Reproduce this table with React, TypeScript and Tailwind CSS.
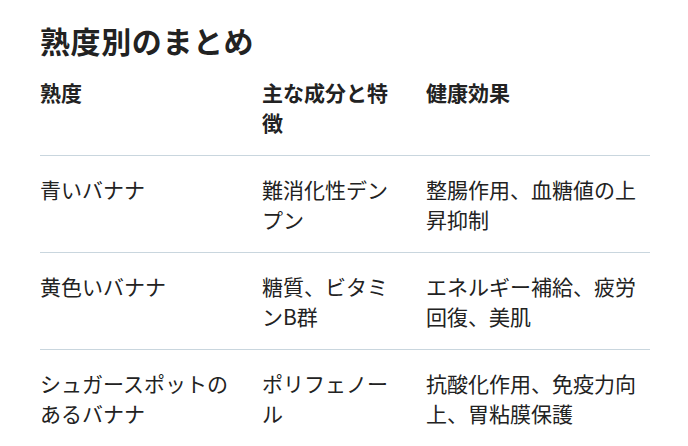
export default function App() {
  const rows = [
    ["青いバナナ", "難消化性デンプン", "整腸作用、血糖値の上昇抑制"],
    ["黄色いバナナ", "糖質、ビタミンB群", "エネルギー補給、疲労回復、美肌"],
    ["シュガースポットのあるバナナ", "ポリフェノール", "抗酸化作用、免疫力向上、胃粘膜保護"],
  ];

  return (
    <div
      className="min-h-screen bg-white text-[#222] pl-[40px] pr-[38px] pt-[21px]"
      style={{ fontFamily: '"Noto Sans CJK JP", "Noto Sans", sans-serif' }}
    >
      <h2 className="text-[30px] leading-[38px] font-bold tracking-[0.02em]">熟度別のまとめ</h2>
      <table className="w-[610px] mt-[18px] text-[21px] leading-[30px] border-collapse table-fixed">
        <colgroup>
          <col className="w-[222px]" />
          <col className="w-[164px]" />
          <col className="w-[224px]" />
        </colgroup>
        <thead>
          <tr className="border-b border-[#c9d6de]">
            <th className="text-left align-top font-bold pb-[18px] pr-[16px]">熟度</th>
            <th className="text-left align-top font-bold pb-[18px] pr-[20px]">主な成分と特徴</th>
            <th className="text-left align-top font-bold pb-[18px] pr-[10px]">健康効果</th>
          </tr>
        </thead>
        <tbody>
          {rows.map((r, i) => (
            <tr key={i} className={i < rows.length - 1 ? "border-b border-[#c9d6de]" : ""}>
              <td className="align-top py-[18px] pr-[16px]">{r[0]}</td>
              <td className="align-top py-[18px] pr-[20px]">{r[1]}</td>
              <td className="align-top py-[18px] pr-[10px]">{r[2]}</td>
            </tr>
          ))}
        </tbody>
      </table>
    </div>
  );
}
